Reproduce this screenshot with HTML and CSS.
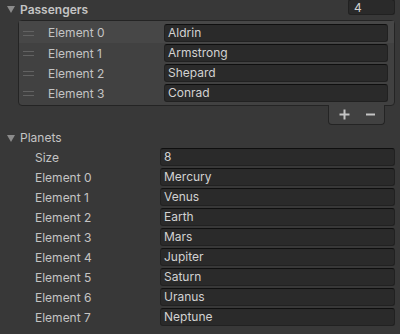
FILE: index.html
```html
<!DOCTYPE html>
<html lang="en">
<head>
  <meta charset="UTF-8">
  <title>Inspector</title>
  <link rel="stylesheet" href="styles.css">
</head>
<body>
  <div class="inspector">

    <!-- Passengers (reorderable list) -->
    <div class="header-row">
      <span class="foldout"></span>
      <span class="header-label bold">Passengers</span>
      <div class="field count-field">4</div>
    </div>

    <div class="list-box">
      <div class="list-row hover">
        <span class="handle"></span>
        <span class="row-label">Element 0</span>
        <div class="field">Aldrin</div>
      </div>
      <div class="list-row">
        <span class="handle"></span>
        <span class="row-label">Element 1</span>
        <div class="field">Armstrong</div>
      </div>
      <div class="list-row">
        <span class="handle"></span>
        <span class="row-label">Element 2</span>
        <div class="field">Shepard</div>
      </div>
      <div class="list-row">
        <span class="handle"></span>
        <span class="row-label">Element 3</span>
        <div class="field">Conrad</div>
      </div>
    </div>
    <div class="list-footer-wrap">
      <div class="list-footer">
        <svg width="11" height="11" viewBox="0 0 11 11"><path d="M5.5 0.5v10M0.5 5.5h10" stroke="#c4c4c4" stroke-width="2"/></svg>
        <svg width="11" height="11" viewBox="0 0 11 11"><path d="M1 5.5h9" stroke="#c4c4c4" stroke-width="2"/></svg>
      </div>
    </div>

    <!-- Planets (old style array) -->
    <div class="header-row planets">
      <span class="foldout"></span>
      <span class="header-label">Planets</span>
    </div>
    <div class="array">
      <div class="array-row"><span class="array-label">Size</span><div class="field">8</div></div>
      <div class="array-row"><span class="array-label">Element 0</span><div class="field">Mercury</div></div>
      <div class="array-row"><span class="array-label">Element 1</span><div class="field">Venus</div></div>
      <div class="array-row"><span class="array-label">Element 2</span><div class="field">Earth</div></div>
      <div class="array-row"><span class="array-label">Element 3</span><div class="field">Mars</div></div>
      <div class="array-row"><span class="array-label">Element 4</span><div class="field">Jupiter</div></div>
      <div class="array-row"><span class="array-label">Element 5</span><div class="field">Saturn</div></div>
      <div class="array-row"><span class="array-label">Element 6</span><div class="field">Uranus</div></div>
      <div class="array-row"><span class="array-label">Element 7</span><div class="field">Neptune</div></div>
    </div>

  </div>
</body>
</html>
```

FILE: styles.css
```css
html, body {
  margin: 0;
  padding: 0;
  background: #383838;
  overflow: hidden;
}

body {
  font-family: Inter, "Noto Sans", sans-serif;
  font-size: 12px;
  color: #c4c4c4;
}

.inspector {
  padding: 0 5px 0 0;
}

/* Foldout headers */
.header-row {
  display: flex;
  align-items: center;
  height: 18px;
  padding-left: 7px;
}

.foldout {
  width: 0;
  height: 0;
  border-left: 4px solid transparent;
  border-right: 4px solid transparent;
  border-top: 7px solid #8b8b8b;
  margin-right: 5px;
  margin-top: 1px;
}

.header-label {
  flex: 1;
}

.header-label.bold {
  font-weight: 600;
}

/* Text fields */
.field {
  box-sizing: border-box;
  height: 18px;
  line-height: 16px;
  padding: 0 3px;
  background: #2a2a2a;
  border: 1px solid #212121;
  border-top-color: #0f0f0f;
  border-radius: 3px;
  color: #d2d2d2;
  white-space: nowrap;
  overflow: hidden;
}

.count-field {
  width: 47px;
  height: 16px;
  line-height: 15px;
  align-self: flex-start;
  margin-top: -1px;
  padding-left: 5px;
}

/* Reorderable list */
.list-box {
  margin: 2px 0 0 18px;
  padding: 1px 0 2px;
  background: #414141;
  border: 1px solid #242424;
  border-radius: 4px;
}

.list-row {
  display: flex;
  align-items: center;
  height: 20px;
  padding-right: 6px;
}

.list-row.hover {
  background: #474747;
  margin-top: -1px;
  padding-top: 1px;
  height: 21px;
}

.handle {
  width: 11px;
  height: 3px;
  border-top: 1px solid #626262;
  border-bottom: 1px solid #626262;
  margin: 1px 14px 0 4px;
}

.row-label {
  width: 116px;
}

.list-row .field {
  flex: 1;
}

.list-footer-wrap {
  display: flex;
  justify-content: flex-end;
  padding-right: 10px;
}

.list-footer {
  display: flex;
  align-items: center;
  gap: 15px;
  width: 57px;
  height: 20px;
  box-sizing: border-box;
  margin-top: -1px;
  padding: 0 0 1px 10px;
  background: #414141;
  border: 1px solid #242424;
  border-top: none;
  border-radius: 0 0 4px 4px;
}

/* Planets array */
.planets {
  margin-top: 3px;
  height: 19px;
}

.array-row {
  display: flex;
  align-items: center;
  height: 20px;
  padding-left: 35px;
}

.array-label {
  width: 125px;
}

.array-row .field {
  flex: 1;
}
```
